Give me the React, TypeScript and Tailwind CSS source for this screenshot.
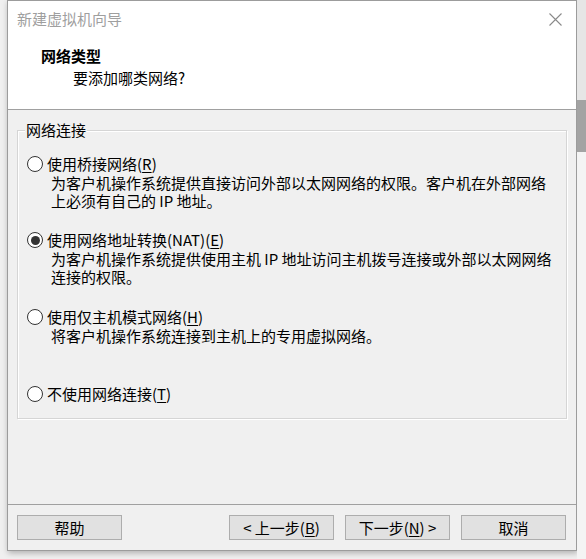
import React from "react";

const FONT = { fontFamily: '"Noto Sans CJK SC", "Noto Sans", sans-serif' };

function Radio({ checked }: { checked?: boolean }) {
  return (
    <span className="w-[16px] h-[16px] min-w-[16px] rounded-full border border-[#333333] bg-white flex items-center justify-center shrink-0">
      {checked ? <span className="w-[9px] h-[9px] rounded-full bg-[#333333]" /> : null}
    </span>
  );
}

function Option({
  label,
  accel,
  checked,
  desc,
  mt,
}: {
  label: string;
  accel: string;
  checked?: boolean;
  desc: string[];
  mt: string;
}) {
  return (
    <div className={mt}>
      <div className="flex items-center h-[20px] gap-[4px]">
        <Radio checked={checked} />
        <span className="leading-[20px]">
          {label}(<span className="underline underline-offset-2">{accel}</span>)
        </span>
      </div>
      {desc.map((d, i) => (
        <div key={i} className="pl-[24px] h-[18px] leading-[18px]">
          {d}
        </div>
      ))}
    </div>
  );
}

function Btn({ children }: { children: React.ReactNode }) {
  return (
    <div className="w-[105px] h-[25px] bg-[#e1e1e1] border border-[#adadad] flex items-center justify-center text-[15px] leading-[20px] text-black whitespace-pre">
      {children}
    </div>
  );
}

export default function App() {
  return (
    <div className="w-[586px] h-[559px] bg-[#f0f0f0] flex overflow-hidden text-[15px] text-black" style={FONT}>
      <div className="w-[7px] shrink-0" />
      <div className="w-[570px] h-[551px] shrink-0 border border-[#9c9c9c] bg-white flex flex-col shadow-[1px_2px_6px_rgba(0,0,0,0.28)]">
        <div className="h-[36px] flex items-center justify-between pl-[9px] pr-[14px]">
          <span className="text-[#9f9f9f] leading-[20px]">新建虚拟机向导</span>
          <svg width="13" height="13" viewBox="0 0 13 13">
            <path d="M0.5 0.5 L12.5 12.5 M12.5 0.5 L0.5 12.5" stroke="#8a8a8a" strokeWidth="1.1" fill="none" />
          </svg>
        </div>
        <div className="h-[72px] pt-[9px]">
          <div className="pl-[33px] font-bold leading-[20px]">网络类型</div>
          <div className="pl-[65px] mt-[2px] leading-[20px]">要添加哪类网络?</div>
        </div>
        <div className="h-px bg-[#a0a0a0]" />
        <div className="flex-1 bg-[#f0f0f0] flex flex-col">
          <div className="mt-[20px] mx-[9px] h-[289px] relative border border-[#d5d5d5] shadow-[inset_1px_1px_0_#ffffff,1px_1px_0_#ffffff] pl-[9px] pt-[23px]">
            <span className="absolute left-[7px] top-[-11px] h-[20px] leading-[20px] px-[1px] bg-[#f0f0f0]">网络连接</span>
            <Option
              mt="mt-0"
              label="使用桥接网络"
              accel="R"
              desc={["为客户机操作系统提供直接访问外部以太网网络的权限。客户机在外部网络", "上必须有自己的 IP 地址。"]}
            />
            <Option
              mt="mt-[20px]"
              label="使用网络地址转换(NAT)"
              accel="E"
              checked
              desc={["为客户机操作系统提供使用主机 IP 地址访问主机拨号连接或外部以太网网络", "连接的权限。"]}
            />
            <Option mt="mt-[21px]" label="使用仅主机模式网络" accel="H" desc={["将客户机操作系统连接到主机上的专用虚拟网络。"]} />
            <Option mt="mt-[39px]" label="不使用网络连接" accel="T" desc={[]} />
          </div>
          <div className="flex-1" />
          <div className="h-px bg-[#a0a0a0]" />
          <div className="h-[45px] flex items-center pl-[9px] pr-[10px]">
            <Btn>帮助</Btn>
            <div className="flex-1" />
            <div className="flex gap-[11px]">
              <Btn>
                {"< 上一步("}<span className="underline underline-offset-2">B</span>{")"}
              </Btn>
              <Btn>
                {"下一步("}<span className="underline underline-offset-2">N</span>{") >"}
              </Btn>
              <Btn>取消</Btn>
            </div>
          </div>
        </div>
      </div>
      <div className="flex-1 flex flex-col">
        <div className="h-[100px] bg-[#e6e6e6]" />
        <div className="h-[52px] bg-[#a3a3a3]" />
        <div className="flex-1 bg-[#f4f4f4]" />
      </div>
    </div>
  );
}
